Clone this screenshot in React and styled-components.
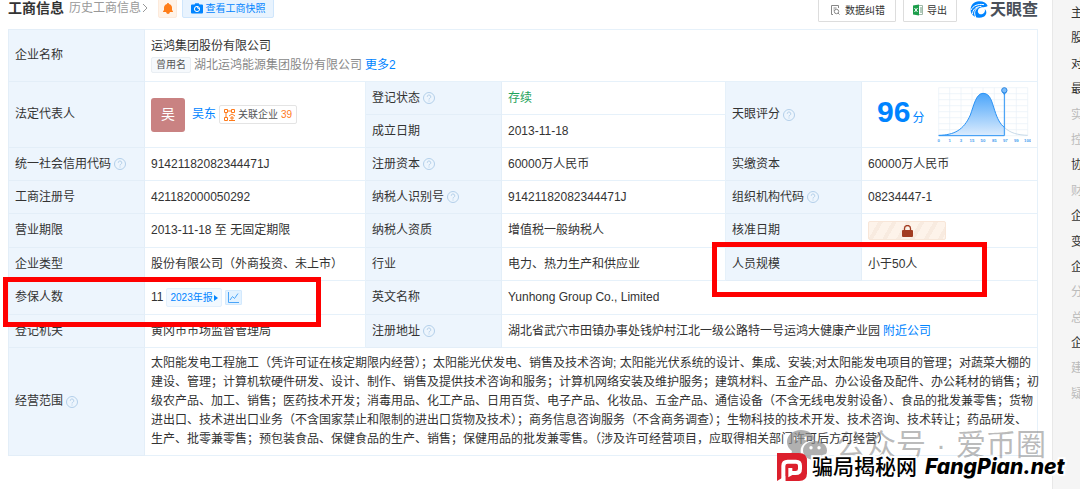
import React from "react";
import styled, { createGlobalStyle } from "styled-components";

const Global = createGlobalStyle`
  * { box-sizing: border-box; }
  body {
    margin: 0;
    background: #fff;
    color: #333;
    font: 12px/19px "Liberation Sans", "Noto Sans CJK SC", sans-serif;
    overflow: hidden;
  }
  button { font: inherit; color: inherit; cursor: pointer; }
  a { color: #0084ff; text-decoration: none; }
  svg { display: block; flex: none; }
`;

const Page = styled.div`
  display: flex;
  min-height: 100vh;
  overflow: hidden;
`;

const Main = styled.main`
  position: relative;
  flex: 1;
  min-width: 0;
  padding: 0 14px 0 8px;
`;

const Header = styled.header`
  display: flex;
  justify-content: space-between;
  align-items: flex-start;
  height: 31px;
  margin-top: -2px;
`;

const HeaderGroup = styled.div`
  display: flex;
  align-items: center;
  height: ${(p) => p.$height}px;
  gap: ${(p) => p.$gap}px;
`;

const Title = styled.h2`
  margin: 0;
  font-size: 14px;
  line-height: 20px;
  font-weight: 700;
`;

const HistoryLink = styled.a`
  display: flex;
  align-items: center;
  color: #999;
`;

const IconButton = styled.button`
  display: grid;
  place-items: center;
  width: 19px;
  height: 20px;
  margin-left: 4px;
  padding: 0;
  border: 1px solid #fdeadb;
  border-radius: 2px;
  background: #fff3e8;
`;

const SnapshotButton = styled.button`
  display: flex;
  align-items: center;
  justify-content: center;
  gap: 3px;
  width: 92px;
  height: 20px;
  padding: 0;
  border: 1px solid #cfe6fc;
  border-radius: 2px;
  background: #e8f3fe;
  color: #0084ff;
  font-size: 10px;
`;

const ToolButton = styled.button`
  display: flex;
  align-items: center;
  gap: 4px;
  height: 24px;
  padding: 0 ${(p) => p.$pad}px;
  border: 1px solid #ddd;
  border-radius: 1px;
  background: #fff;
  font-size: 10px;
`;

const Brand = styled.div`
  display: flex;
  align-items: center;
  gap: 2px;
  height: 22px;
  margin-left: 6px;
  align-self: flex-start;
  color: #4a5059;
  font-size: 16px;
  font-weight: 700;
`;

const InfoTable = styled.table`
  width: 100%;
  table-layout: fixed;
  border-collapse: collapse;
  border: 1px solid #e6f1fa;
`;

const Col = styled.col`
  width: ${(p) => (p.$width ? `${p.$width}px` : "auto")};
`;

const Row = styled.tr`
  height: ${(p) => p.$height || 33}px;
`;

const Label = styled.th`
  padding: 0 6px;
  border: 1px solid #e3eef8;
  background: #edf5fd;
  font-weight: 400;
  text-align: left;
  white-space: nowrap;
`;

const Value = styled.td`
  padding: 0 6px;
  border: 1px solid #e6f1fa;
  color: ${(p) => p.$color || "inherit"};
  white-space: nowrap;
`;

const Inline = styled.div`
  display: flex;
  align-items: center;
  gap: 3px;
`;

const FormerTag = styled.span`
  padding: 0 4px;
  border: 1px solid #e9eef3;
  border-radius: 2px;
  background: #f6f9fc;
  font-size: 10px;
  line-height: 14px;
  color: #555;
`;

const Muted = styled.span`
  color: #888;
`;

const Avatar = styled.span`
  display: grid;
  place-items: center;
  width: 34px;
  height: 34px;
  margin-right: 4px;
  border-radius: 3px;
  background: #c98282;
  color: #fff;
  font-size: 14px;
`;

const RelatedButton = styled.button`
  display: flex;
  align-items: center;
  gap: 3px;
  height: 19px;
  padding: 0 4px;
  border: 1px solid #e4e4e4;
  border-radius: 2px;
  background: #fff;
  color: #555;
  font-size: 10px;
`;

const Count = styled.span`
  color: #ff7a1a;
`;

const ReportLink = styled.a`
  display: flex;
  align-items: center;
  gap: 1px;
  height: 19px;
  padding: 0 3px;
  border: 1px solid #e3f0fd;
  border-radius: 2px;
  background: #f2f9ff;
  font-size: 10px;
`;

const TrendButton = styled.button`
  display: grid;
  place-items: center;
  width: 17px;
  height: 15px;
  padding: 0;
  border: 1px solid #d3e9fd;
  border-radius: 1px;
  background: #e3f2ff;
`;

const LockedButton = styled.button`
  display: grid;
  place-items: center;
  width: 78px;
  height: 19px;
  padding: 0;
  border: 1px solid #f8e6d8;
  border-radius: 2px;
  background: repeating-linear-gradient(120deg, #fdf3ea 0 8px, #f8ebe0 8px 12px);
`;

const ScoreBox = styled.div`
  display: flex;
  align-items: center;
  justify-content: space-between;
  padding: 0 0 0 9px;
`;

const Score = styled.div`
  color: #0084ff;
  line-height: 34px;
`;

const ScoreNumber = styled.strong`
  margin-right: 2px;
  font-size: 30px;
`;

const ScopeLine = styled.span`
  display: block;
`;

const Side = styled.nav`
  width: 28px;
  padding: 4px 0 0 18px;
  border-left: 1px solid #e8e8e8;
  background: #f5f5f5;
  overflow: hidden;
`;

const SideList = styled.ul`
  display: flex;
  flex-direction: column;
  justify-content: space-between;
  height: 400px;
  margin: 0;
  padding: 0;
  list-style: none;
`;

const SideLink = styled.a`
  color: ${(p) => (p.$off ? "#bbb" : "#333")};
`;

const Marker = styled.div`
  position: absolute;
  left: ${(p) => p.$x}px;
  top: ${(p) => p.$y}px;
  width: ${(p) => p.$w}px;
  height: ${(p) => p.$h}px;
  border: 5px solid #f00;
  pointer-events: none;
`;

const Watermark = styled.div`
  position: absolute;
  left: 786px;
  top: 424px;
  display: flex;
  align-items: center;
  width: 260px;
  color: rgba(90, 90, 90, 0.42);
  font-size: 30px;
  line-height: 42px;
  white-space: nowrap;
`;

const WatermarkText = styled.div`
  flex: 1;
  display: flex;
  justify-content: space-between;
  margin-left: 8px;
`;

const SiteStamp = styled.div`
  position: absolute;
  left: 777px;
  top: 451px;
  display: flex;
  align-items: center;
  color: #000;
  line-height: 32px;
  white-space: nowrap;
  -webkit-text-stroke: 4px #fff;
  paint-order: stroke fill;
`;

const StampName = styled.span`
  margin: 0 8px 0 5px;
  font-size: 21px;
  font-weight: 500;
`;

const StampDomain = styled.span`
  font-family: Inter, sans-serif;
  font-size: 21px;
  font-weight: 800;
  font-style: italic;
`;

const Help = () => (
  <svg width="12" height="12" viewBox="0 0 24 24" fill="none" stroke="#b3cfe9" strokeWidth="2">
    <circle cx="12" cy="12" r="11" />
    <path d="M8.5 9.5a3.5 3.5 0 1 1 5.2 3c-1.2.7-1.7 1.2-1.7 2.5M12 17v2" />
  </svg>
);

const Field = ({ name, help, ...rest }) => (
  <Label scope="row" {...rest}>
    <Inline>{name}{help && <Help />}</Inline>
  </Label>
);

const ScoreChart = () => {
  const xs = [53, 86, 120, 153, 186, 220, 253, 286, 320];
  const ys = [35, 53, 71, 89, 107, 125, 143, 161, 179];
  const labels = ["0", "1", "3", "15", "50", "85", "97", "99", "100"];
  return (
    <svg width="96" height="58" viewBox="42 30 288 174">
      <defs>
        <linearGradient id="hill" x1="0" y1="0" x2="0" y2="1">
          <stop offset="0" stopColor="#4ba5fa" />
          <stop offset="1" stopColor="#dcecfd" />
        </linearGradient>
      </defs>
      <g stroke="#e9f0f7" strokeWidth="2">
        {xs.map((x) => <path key={x} d={`M${x} 35V179`} />)}
        {ys.map((y) => <path key={y} d={`M53 ${y}H320`} />)}
      </g>
      <path fill="url(#hill)" d="M53 179C100 177 128 162 148 117C158 90 165 52 186 52C208 52 212 76 221 103C229 129 238 145 250 154V179Z" />
      <path fill="none" stroke="#2b93f5" strokeWidth="3" d="M53 178C100 177 128 162 148 117C158 90 165 52 186 52C208 52 212 76 221 103C229 129 238 145 250 154" />
      <path fill="none" stroke="#c8dae9" strokeWidth="3" d="M250 154C268 172 292 177 320 178" />
      <path stroke="#2b93f5" strokeWidth="3" d="M53 179H250V50" fill="none" />
      <path d="M242 46H258L250 58Z" fill="#2b93f5" />
      <circle cx="250" cy="43" r="8" fill="#7dbdfb" stroke="#2b86e0" strokeWidth="3" />
      <g fill="#4a9fef" fontSize="13" fontWeight="700" textAnchor="middle">
        {xs.map((x, i) => <text key={x} x={x} y="197">{labels[i]}</text>)}
      </g>
    </svg>
  );
};

const SCOPE = [
  "太阳能发电工程施工（凭许可证在核定期限内经营）；太阳能光伏发电、销售及技术咨询; 太阳能光伏系统的设计、集成、安装;对太阳能发电项目的管理；对蔬菜大棚的",
  "建设、管理；计算机软硬件研发、设计、制作、销售及提供技术咨询和服务；计算机网络安装及维护服务；建筑材料、五金产品、办公设备及配件、办公耗材的销售；初",
  "级农产品、加工、销售；医药技术开发；消毒用品、化工产品、日用百货、电子产品、化妆品、五金产品、通信设备（不含无线电发射设备）、食品的批发兼零售；货物",
  "进出口、技术进出口业务（不含国家禁止和限制的进出口货物及技术）；商务信息咨询服务（不含商务调查）；生物科技的技术开发、技术咨询、技术转让；药品研发、",
  "生产、批零兼零售；预包装食品、保健食品的生产、销售；保健用品的批发兼零售。（涉及许可经营项目，应取得相关部门许可后方可经营）",
];

const SIDE = [
  ["主"], ["股"], ["对"], ["最"], ["实", true], ["控", true], ["协"], ["财", true],
  ["企"], ["变"], ["企"], ["分", true], ["总", true], ["企"], ["建", true], ["疑", true],
];

export default function App() {
  return (
    <Page>
      <Global />
      <Main>
        <Header>
          <HeaderGroup $height={20} $gap={5}>
            <Title>工商信息</Title>
            <HistoryLink href="#history">
              历史工商信息
              <svg width="8" height="10" viewBox="0 0 8 10" fill="none" stroke="#999">
                <path d="M2 1l4 4-4 4" />
              </svg>
            </HistoryLink>
            <IconButton aria-label="订阅">
              <svg width="10" height="11" viewBox="0 0 10 11" fill="#ff7d18">
                <path d="M5 0C5.6 0 6 .4 6 1 8 1.500 9 3 9 4.500V7L10 8.500V9H0V8.500L1 7V4.500C1 3 2 1.500 4 1 4 .4 4.400 0 5 0ZM3 9H7Q6.500 11 5 11T3 9Z" />
              </svg>
            </IconButton>
            <SnapshotButton>
              <svg width="12" height="11" viewBox="0 0 12 11">
                <path fill="#0084ff" d="M3.500 1.500 4.300.3H7.700L8.500 1.500H11Q12 1.500 12 2.500V9.500Q12 10.500 11 10.500H1Q0 10.500 0 9.500V2.500Q0 1.500 1 1.500Z" />
                <circle cx="6" cy="6" r="2.600" fill="none" stroke="#fff" />
                <path d="M6 4.500A1.500 1.500 0 0 1 7.500 6" stroke="#fff" fill="none" />
              </svg>
              查看工商快照
            </SnapshotButton>
          </HeaderGroup>
          <HeaderGroup $height={24} $gap={7}>
            <ToolButton $pad={10}>
              <svg width="12" height="10" viewBox="0 0 12 10" fill="none" stroke="#888">
                <path d="M4 9.500H2.500V.5H9.500V3M4.500 3H7.500M4.500 5H5.500" />
                <circle cx="7.500" cy="6.500" r="2.200" />
                <path d="M9 8l1.500 1.500" />
              </svg>
              数据纠错
            </ToolButton>
            <ToolButton $pad={9}>
              <svg width="10" height="12" viewBox="0 0 10 12">
                <path d="M4 1.500H9.500V10.500H4" fill="#fff" stroke="#9fb8a8" />
                <path d="M7 4H9M7 6H9M7 8H9" stroke="#6a9c7c" />
                <path d="M0 1.500 6 .5V11.500L0 10.500Z" fill="#1d9e4b" />
                <path d="M1.500 4 4.500 8M4.500 4 1.500 8" stroke="#fff" />
              </svg>
              导出
            </ToolButton>
            <Brand>
              <svg width="18" height="17" viewBox="0 0 54 51">
                <path fill="#0084ff" d="M27 1C41 1 50 6 53 15C47 18 42 19 36 19C27 20 22 27 24 34C26 40 33 42 39 38C45 34 46 29 44 24C52 31 50 42 41 47C28 54 11 50 4 37C-3 20 8 1 27 1Z" />
                <path d="M3 27C9 14 24 8 42 11M7 40C8 27 16 17 34 16M17 48C11 36 14 25 25 19" fill="none" stroke="#fff" strokeWidth="3" />
              </svg>
              天眼查
            </Brand>
          </HeaderGroup>
        </Header>

        <InfoTable>
          <colgroup>
            <Col $width={136} />
            <Col $width={221} />
            <Col $width={136} />
            <Col $width={224} />
            <Col $width={136} />
            <Col />
          </colgroup>
          <tbody>
            <Row $height={52}>
              <Field name="企业名称" />
              <Value colSpan={5}>
                <div>运鸿集团股份有限公司</div>
                <Inline>
                  <FormerTag>曾用名</FormerTag>
                  <Muted>湖北运鸿能源集团股份有限公司</Muted>
                  <a href="#more">更多2</a>
                </Inline>
              </Value>
            </Row>
            <Row>
              <Field name="法定代表人" rowSpan={2} />
              <Value rowSpan={2}>
                <Inline>
                  <Avatar>吴</Avatar>
                  <a href="#person">吴东</a>
                  <RelatedButton>
                    <svg width="11" height="12" viewBox="0 0 11 12" fill="none" stroke="#ff7a1a">
                      <path d="M.5.5H3.500V3.500H.5ZM7.500.5H10.500V3.500H7.500ZM.5 8.500H3.500V11.500H.5ZM3.500 2H7.500M2 3.500V8.500M5 7 8 5 11 7M8 7V11M6 9H10M5 11.500H11" />
                    </svg>
                    关联企业 <Count>39</Count>
                  </RelatedButton>
                </Inline>
              </Value>
              <Field name="登记状态" help />
              <Value $color="#1fa35c">存续</Value>
              <Field name="天眼评分" help rowSpan={2} />
              <Value rowSpan={2}>
                <ScoreBox>
                  <Score><ScoreNumber>96</ScoreNumber>分</Score>
                  <ScoreChart />
                </ScoreBox>
              </Value>
            </Row>
            <Row>
              <Field name="成立日期" />
              <Value>2013-11-18</Value>
            </Row>
            <Row>
              <Field name="统一社会信用代码" help />
              <Value>91421182082344471J</Value>
              <Field name="注册资本" help />
              <Value>60000万人民币</Value>
              <Field name="实缴资本" />
              <Value>60000万人民币</Value>
            </Row>
            <Row>
              <Field name="工商注册号" />
              <Value>421182000050292</Value>
              <Field name="纳税人识别号" help />
              <Value>91421182082344471J</Value>
              <Field name="组织机构代码" help />
              <Value>08234447-1</Value>
            </Row>
            <Row $height={34}>
              <Field name="营业期限" />
              <Value>2013-11-18 至 无固定期限</Value>
              <Field name="纳税人资质" />
              <Value>增值税一般纳税人</Value>
              <Field name="核准日期" />
              <Value>
                <LockedButton aria-label="解锁核准日期">
                  <svg width="11" height="12" viewBox="0 0 11 12">
                    <path d="M2.500 6V3.500a3 3 0 0 1 6 0V6" fill="none" stroke="#a23c22" strokeWidth="1.300" />
                    <rect y="5" width="11" height="7" rx="1" fill="#a23c22" />
                  </svg>
                </LockedButton>
              </Value>
            </Row>
            <Row>
              <Field name="企业类型" />
              <Value>股份有限公司（外商投资、未上市）</Value>
              <Field name="行业" />
              <Value>电力、热力生产和供应业</Value>
              <Field name="人员规模" />
              <Value>小于50人</Value>
            </Row>
            <Row $height={34}>
              <Field name="参保人数" />
              <Value>
                <Inline>
                  11
                  <ReportLink href="#report">
                    2023年报
                    <svg width="4" height="6" viewBox="0 0 4 6" fill="#0084ff"><path d="M0 0 4 3 0 6Z" /></svg>
                  </ReportLink>
                  <TrendButton aria-label="趋势">
                    <svg width="11" height="11" viewBox="0 0 11 11" fill="none" stroke="#4ba5f8">
                      <path d="M.5 0V10.500H11M2 8 4.500 4.500 6.500 6.500 10 1.500" />
                    </svg>
                  </TrendButton>
                </Inline>
              </Value>
              <Field name="英文名称" />
              <Value colSpan={3}>Yunhong Group Co., Limited</Value>
            </Row>
            <Row>
              <Field name="登记机关" />
              <Value>黄冈市市场监督管理局</Value>
              <Field name="注册地址" help />
              <Value colSpan={3}>
                <Inline>
                  湖北省武穴市田镇办事处钱炉村江北一级公路特一号运鸿大健康产业园
                  <a href="#nearby">附近公司</a>
                </Inline>
              </Value>
            </Row>
            <Row $height={108}>
              <Field name="经营范围" help />
              <Value colSpan={5}>
                {SCOPE.map((line) => <ScopeLine key={line}>{line}</ScopeLine>)}
              </Value>
            </Row>
          </tbody>
        </InfoTable>

        <Marker $x={3} $y={277} $w={318} $h={50} />
        <Marker $x={712} $y={242} $w={275} $h={55} />

        <Watermark>
          <svg width="42" height="32" viewBox="0 0 42 32" fill="#8f8f8f" fillOpacity="0.7">
            <path fillRule="evenodd" d="M15 1C7 1 1 6 1 13c0 4 2 7 5 9l-1 4 5-2c2 .5 3 .7 5 .7C13 17 19 11 29 11 28 5 22 1 15 1ZM10 7.500a2 2 0 1 1 0 4 2 2 0 0 1 0-4ZM20 7.500a2 2 0 1 1 0 4 2 2 0 0 1 0-4Z" />
            <path fillRule="evenodd" d="M29 12c-7 0-12 4-12 9.500S22 31 29 31c1.500 0 3-.3 4-.6l4 2-1-3.500c3-2 5-4 5-7.400C41 16 36 12 29 12ZM25 17a1.700 1.700 0 1 1 0 3.400 1.700 1.700 0 0 1 0-3.400ZM33 17a1.700 1.700 0 1 1 0 3.400 1.700 1.700 0 0 1 0-3.400Z" />
          </svg>
          <WatermarkText><span>公众号</span><span>·</span><span>爱币圈</span></WatermarkText>
        </Watermark>

        <SiteStamp>
          <svg width="30" height="30" viewBox="0 0 90 90">
            <path fill="#dc1f2c" d="M0 3H66Q90 3 90 27V64Q90 87 66 87H0Z" />
            <path fill="none" stroke="#fff" strokeWidth="12" d="M19 90V42Q19 29 32 29H57Q69 29 69 41V50Q69 63 56 63H40" />
            <path fill="#fff" d="M34 48H46V69L34 76Z" />
            <path fill="#fff" d="M0 90V87L25 72V90Z" />
          </svg>
          <StampName>骗局揭秘网</StampName>
          <StampDomain>FangPian.net</StampDomain>
        </SiteStamp>
      </Main>
      <Side aria-label="目录">
        <SideList>
          {SIDE.map(([text, off], i) => (
            <li key={i}><SideLink href="#section" $off={off}>{text}</SideLink></li>
          ))}
        </SideList>
      </Side>
    </Page>
  );
}
